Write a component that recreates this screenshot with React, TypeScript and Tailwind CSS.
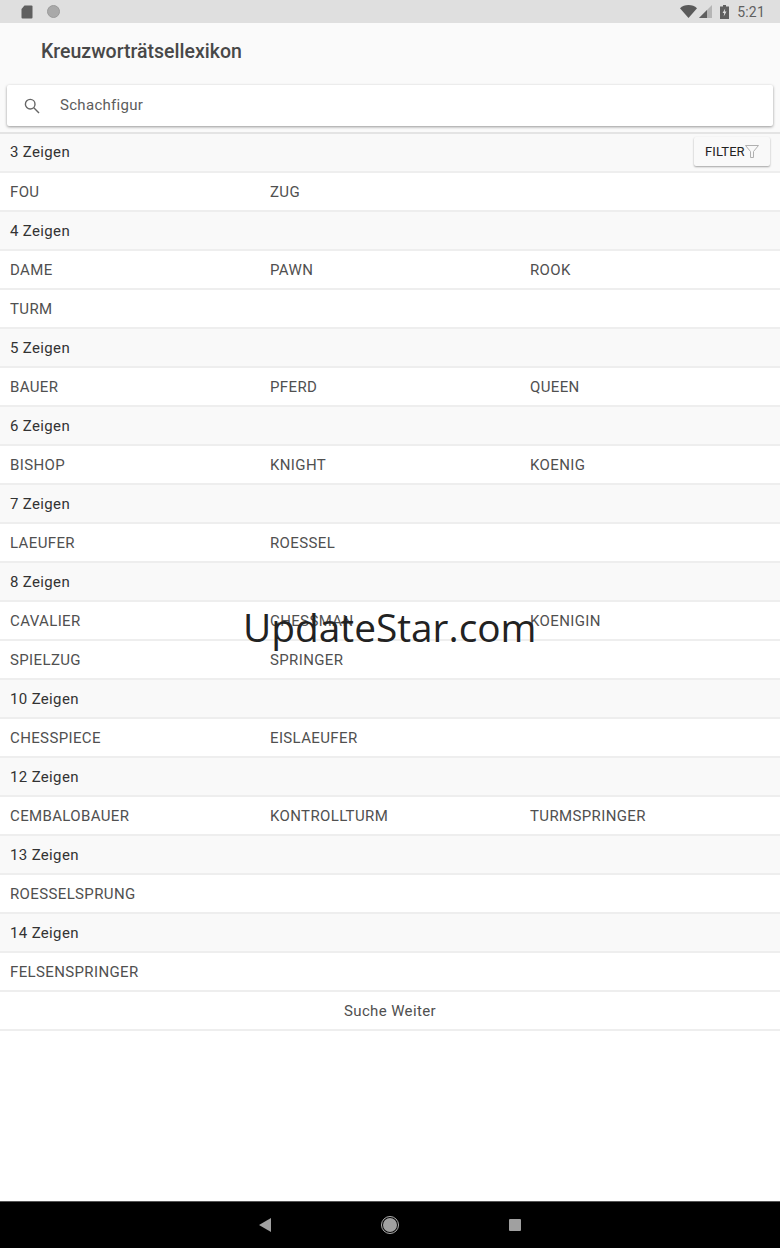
const sections: { title: string; words: string[] }[] = [
  { title: "3 Zeigen", words: ["FOU", "ZUG"] },
  { title: "4 Zeigen", words: ["DAME", "PAWN", "ROOK", "TURM"] },
  { title: "5 Zeigen", words: ["BAUER", "PFERD", "QUEEN"] },
  { title: "6 Zeigen", words: ["BISHOP", "KNIGHT", "KOENIG"] },
  { title: "7 Zeigen", words: ["LAEUFER", "ROESSEL"] },
  { title: "8 Zeigen", words: ["CAVALIER", "CHESSMAN", "KOENIGIN", "SPIELZUG", "SPRINGER"] },
  { title: "10 Zeigen", words: ["CHESSPIECE", "EISLAEUFER"] },
  { title: "12 Zeigen", words: ["CEMBALOBAUER", "KONTROLLTURM", "TURMSPRINGER"] },
  { title: "13 Zeigen", words: ["ROESSELSPRUNG"] },
  { title: "14 Zeigen", words: ["FELSENSPRINGER"] },
];

function chunk(words: string[]) {
  const rows: string[][] = [];
  for (let i = 0; i < words.length; i += 3) rows.push(words.slice(i, i + 3));
  return rows;
}

function StatusBar() {
  return (
    <div className="h-[23px] bg-[#dfdfdf] flex items-center justify-between pl-[21px] pr-[15px] shrink-0">
      <div className="flex items-center gap-[14px]">
        <svg width="12" height="14" viewBox="0 0 12 14">
          <path d="M3.5 0.5H10.5a1 1 0 0 1 1 1V12.5a1 1 0 0 1-1 1H1.5a1 1 0 0 1-1-1V4Z" fill="#5f5f5f" />
        </svg>
        <div className="w-[13px] h-[13px] rounded-full bg-[#a9a9a9] border border-[#9a9a9a]" />
      </div>
      <div className="flex items-center">
        <svg width="17" height="13" viewBox="0 0 17 13">
          <path d="M0 3.2C2.2 1.2 5.2 0 8.5 0s6.3 1.2 8.5 3.2L8.5 13Z" fill="#5a5a5a" />
        </svg>
        <svg width="13" height="13" viewBox="0 0 13 13" className="ml-[2px]">
          <path d="M13 0V13H0Z" fill="#b5b5b5" />
          <path d="M8 5V13H0Z" fill="#5f5f5f" />
        </svg>
        <svg width="9" height="14" viewBox="0 0 9 14" className="ml-[8px]">
          <path d="M3 0H6V1.5H9V14H0V1.5H3Z" fill="#5f5f5f" />
          <path d="M5.2 3.5 2.6 8H4.2L3.7 11.5 6.5 6.6H4.8Z" fill="#dfdfdf" />
        </svg>
        <span className="ml-[8px] text-[14px] leading-none text-[#5f5f5f] tracking-[0.2px]">5:21</span>
      </div>
    </div>
  );
}

function Header() {
  return (
    <div className="h-[111px] bg-[#fafafa] border-b-2 border-[#e4e4e4] shrink-0">
      <div className="h-[62px] flex items-center pl-[41px] pb-[5px]">
        <span className="text-[19.5px] font-medium text-[#484848]">Kreuzworträtsellexikon</span>
      </div>
      <div className="mx-[7px] h-[41px] bg-white rounded-[2px] shadow-[0_1px_3px_rgba(0,0,0,0.4)] flex items-center pl-[17px]">
        <svg width="16" height="16" viewBox="0 0 16 16" fill="none" stroke="#666666" strokeWidth="1.4">
          <circle cx="6.2" cy="6.2" r="4.8" />
          <path d="M9.8 9.8 15 15" />
        </svg>
        <span className="ml-[20px] text-[15px] text-[#5c5c5c] tracking-[0.3px]">Schachfigur</span>
      </div>
    </div>
  );
}

function SectionRow({ title, filter }: { title: string; filter?: boolean }) {
  return (
    <div className={filter ? "h-[39px] bg-[#f9f9f9] border-b-2 border-[#eeeeee] flex items-center justify-between px-[10px]" : "h-[39px] pt-[2px] bg-[#f9f9f9] border-b-2 border-[#eeeeee] flex items-center justify-between px-[10px]"}>
      <span className="text-[15px] text-[#333333] tracking-[0.35px]">{title}</span>
      {filter && (
        <div className="w-[76px] h-[29px] mb-[2px] bg-[#f9f9f9] rounded-[2px] shadow-[0_1px_2px_rgba(0,0,0,0.35)] flex items-center pl-[11px]">
          <span className="text-[13px] text-[#222222] tracking-[0.1px]">FILTER</span>
          <svg width="14" height="13" viewBox="0 0 14 13" fill="none" stroke="#b0b0b0" strokeWidth="1">
            <path d="M0.5 0.5H13.5L8.5 6.5V12.5H5.5V6.5Z" />
          </svg>
        </div>
      )}
    </div>
  );
}

function App() {
  return (
    <div
      className="relative w-[780px] h-[1248px] bg-white flex flex-col overflow-hidden"
      style={{ fontFamily: "Roboto, 'Liberation Sans', sans-serif" }}
    >
      <StatusBar />
      <Header />
      <div className="flex-1">
        {sections.map((s, i) => (
          <div key={s.title}>
            <SectionRow title={s.title} filter={i === 0} />
            {chunk(s.words).map((row) => (
              <div key={row[0]} className="h-[39px] pt-[2px] border-b-2 border-[#eeeeee] grid grid-cols-[260px_260px_250px] items-center pl-[10px]">
                {row.map((w) => (
                  <span key={w} className="text-[15px] text-[#505050] tracking-[0.37px]">
                    {w}
                  </span>
                ))}
              </div>
            ))}
          </div>
        ))}
        <div className="h-[39px] pt-[2px] border-b-2 border-[#eeeeee] flex items-center justify-center">
          <span className="text-[15px] text-[#505050] tracking-[0.37px]">Suche Weiter</span>
        </div>
      </div>
      <div className="h-[47px] bg-black border-t border-[#555555] flex items-center justify-center shrink-0">
        <svg width="12" height="14" viewBox="0 0 12 14" className="mr-[110px]">
          <path d="M12 0V14L0 7Z" fill="#a0a0a0" />
        </svg>
        <div className="w-[18px] h-[18px] rounded-full border border-[#b0b0b0] flex items-center justify-center">
          <div className="w-[14px] h-[14px] rounded-full bg-[#a0a0a0]" />
        </div>
        <div className="ml-[110px] w-[12px] h-[12px] rounded-[1px] bg-[#a0a0a0]" />
      </div>
      <div
        className="absolute left-[243px] top-[600px] text-[38.8px] leading-[54px] text-[#222222] whitespace-nowrap"
        style={{ fontFamily: "'Open Sans', sans-serif" }}
      >
        UpdateStar.com
      </div>
    </div>
  );
}

export default App;
